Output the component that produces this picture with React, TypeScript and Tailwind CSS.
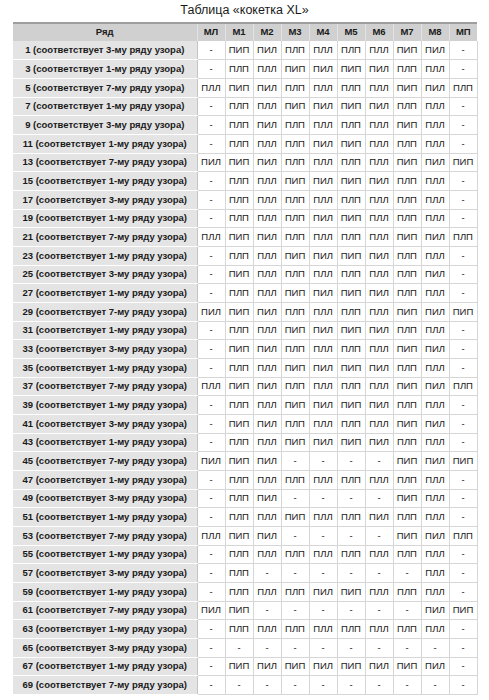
const cols = ['МЛ', 'М1', 'М2', 'М3', 'М4', 'М5', 'М6', 'М7', 'М8', 'МП'];

const rows: [number, number, string][] = [
  [1, 3, '- ПИП ПИЛ ПЛП ПЛЛ ПЛП ПЛЛ ПИП ПИЛ -'],
  [3, 1, '- ПЛП ПЛЛ ПИП ПИЛ ПИП ПИЛ ПЛП ПЛЛ -'],
  [5, 7, 'ПЛЛ ПИП ПИЛ ПЛП ПЛЛ ПЛП ПЛЛ ПИП ПИЛ ПЛП'],
  [7, 1, '- ПЛП ПЛЛ ПИП ПИЛ ПИП ПИЛ ПЛП ПЛЛ -'],
  [9, 3, '- ПЛП ПИЛ ПЛП ПЛЛ ПЛП ПЛЛ ПИП ПЛЛ -'],
  [11, 1, '- ПЛП ПЛЛ ПЛП ПИЛ ПИП ПЛЛ ПЛП ПЛЛ -'],
  [13, 7, 'ПИЛ ПИП ПИЛ ПЛП ПЛЛ ПЛП ПЛЛ ПИП ПИЛ ПИП'],
  [15, 1, '- ПЛП ПЛЛ ПИП ПИЛ ПИП ПИЛ ПЛП ПЛЛ -'],
  [17, 3, '- ПЛП ПЛЛ ПЛП ПЛЛ ПЛП ПЛЛ ПЛП ПЛЛ -'],
  [19, 1, '- ПЛП ПЛЛ ПЛП ПИЛ ПИП ПЛЛ ПЛП ПЛЛ -'],
  [21, 7, 'ПЛЛ ПИП ПИЛ ПЛП ПЛЛ ПЛП ПЛЛ ПИП ПИЛ ПЛП'],
  [23, 1, '- ПЛП ПЛЛ ПИП ПИЛ ПИП ПИЛ ПЛП ПЛЛ -'],
  [25, 3, '- ПИП ПЛЛ ПЛП ПЛЛ ПЛП ПЛЛ ПЛП ПИЛ -'],
  [27, 1, '- ПЛП ПЛЛ ПИП ПИЛ ПИП ПИЛ ПЛП ПЛЛ -'],
  [29, 7, 'ПИЛ ПИП ПИЛ ПЛП ПЛЛ ПЛП ПЛЛ ПИП ПИЛ ПИП'],
  [31, 1, '- ПЛП ПЛЛ ПИП ПИЛ ПИП ПИЛ ПЛП ПЛЛ -'],
  [33, 3, '- ПИП ПИЛ ПЛП ПЛЛ ПЛП ПЛЛ ПИП ПИЛ -'],
  [35, 1, '- ПЛП ПЛЛ ПИП ПИЛ ПИП ПИЛ ПЛП ПЛЛ -'],
  [37, 7, 'ПЛЛ ПИП ПИЛ ПЛП ПЛЛ ПЛП ПЛЛ ПИП ПИЛ ПЛП'],
  [39, 1, '- ПЛП ПЛЛ ПИП ПИЛ ПИП ПИЛ ПЛП ПЛЛ -'],
  [41, 3, '- ПИП ПИЛ ПЛП ПЛЛ ПЛП ПЛЛ ПИП ПИЛ -'],
  [43, 1, '- ПЛП ПЛЛ ПИП ПИЛ ПИП ПИЛ ПЛП ПЛЛ -'],
  [45, 7, 'ПИЛ ПИП ПИЛ - - - - ПИП ПИЛ ПИП'],
  [47, 1, '- ПЛП ПЛЛ ПЛП ПЛЛ ПЛП ПЛЛ ПЛП ПЛЛ -'],
  [49, 3, '- ПЛП ПИЛ - - - - ПИП ПЛЛ -'],
  [51, 1, '- ПЛП ПЛЛ ПИП ПЛЛ ПЛП ПИЛ ПЛП ПЛЛ -'],
  [53, 7, 'ПЛЛ ПИП ПИЛ - - - - ПИП ПИЛ ПЛП'],
  [55, 1, '- ПЛП ПЛЛ ПЛП ПЛЛ ПЛП ПЛЛ ПЛП ПЛЛ -'],
  [57, 3, '- ПЛП - - - - - - ПЛЛ -'],
  [59, 1, '- ПЛП ПЛЛ ПЛП ПИЛ ПИП ПЛЛ ПЛП ПЛЛ -'],
  [61, 7, 'ПИЛ ПИП - - - - - - ПИЛ ПИП'],
  [63, 1, '- ПЛП ПЛЛ ПЛП ПЛЛ ПЛП ПЛЛ ПЛП ПЛЛ -'],
  [65, 3, '- - - - - - - - - -'],
  [67, 1, '- ПИП ПИЛ ПИП ПИЛ ПИП ПИЛ ПИП ПИЛ -'],
  [69, 7, '- - - - - - - - - -'],
];

export default function App() {
  return (
    <div className="w-[489px] bg-white text-[#1a1a1a]" style={{ fontFamily: '"Liberation Sans", Arial, sans-serif' }}>
      {/* Title */}
      <div className="h-[22px] pt-[3px] text-center text-[12.5px] leading-[14px]">Таблица «кокетка XL»</div>

      <table className="ml-[13px] w-[464px] border-collapse table-fixed">
        <colgroup>
          <col className="w-[184px]" />
          {cols.map((c) => (
            <col key={c} className="w-[28px]" />
          ))}
        </colgroup>
        <thead>
          <tr className="h-[18px] bg-[#d0d0d0] border-t-2 border-[#9e9e9e]">
            <th className="p-0 text-[9.5px] font-bold text-center border-r border-[#e2e2e2]">Ряд</th>
            {cols.map((c) => (
              <th key={c} className="p-0 text-[9.5px] font-bold text-center border-r border-[#e2e2e2] last:border-r-0">
                {c}
              </th>
            ))}
          </tr>
        </thead>
        <tbody>
          {rows.map(([n, p, cells]) => (
            <tr key={n} className="h-[18.68px]">
              <td className="p-0 bg-[#e4e4e4] border-b border-white border-r border-r-[#c4c4c4] text-center text-[9.5px] font-bold whitespace-nowrap">
                {n} (соответствует {p}-му ряду узора)
              </td>
              {cells.split(' ').map((v, i) => (
                <td key={i} className="p-0 text-center text-[9.5px] border-b border-r border-[#d6d6d6] whitespace-nowrap">
                  {v}
                </td>
              ))}
            </tr>
          ))}
        </tbody>
      </table>
    </div>
  );
}
